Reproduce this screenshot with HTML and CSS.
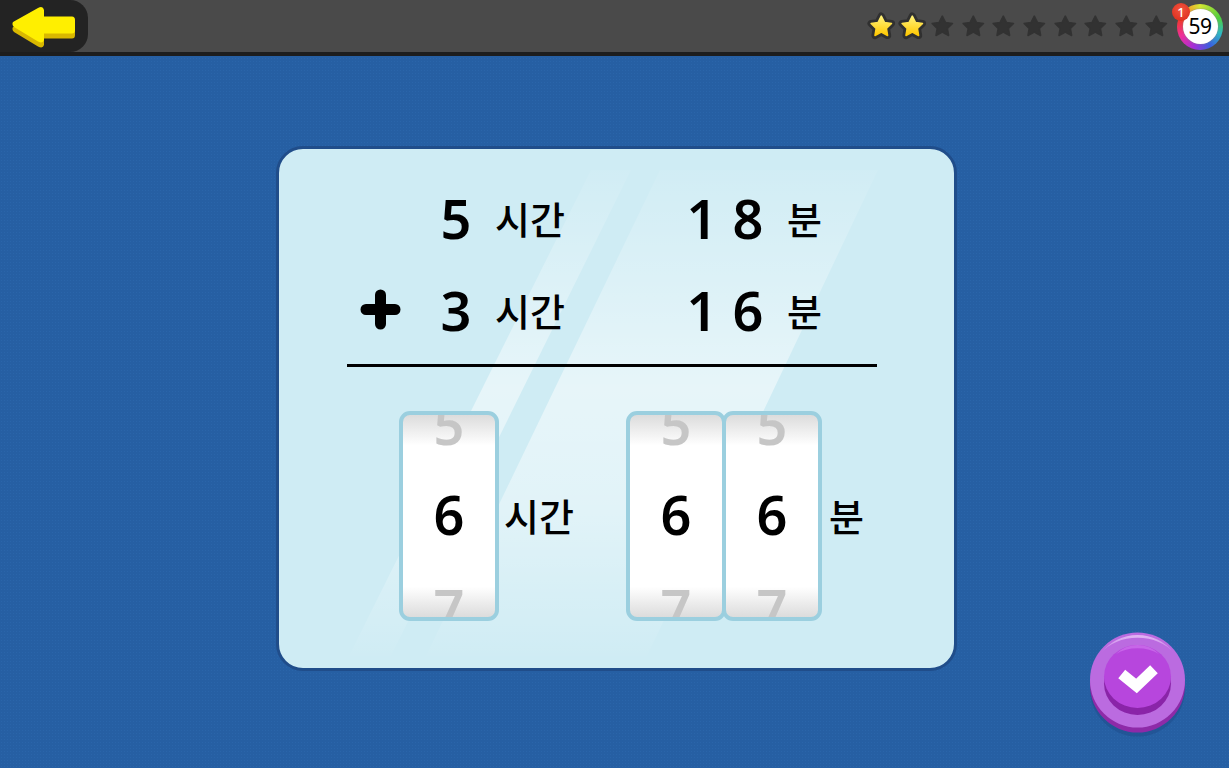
FILE: index.html
```html
<!DOCTYPE html>
<html lang="ko">
<head>
<meta charset="utf-8">
<title>시간 더하기</title>
<link rel="stylesheet" href="styles.css">
</head>
<body>
<header class="topbar">
  <button class="back" aria-label="back">
    <svg class="arrow" width="88" height="52" viewBox="0 0 88 52">
      <path class="arrow-top" d="M13 22 Q11.500 25 14 27 L38 41.500 Q43 44 44 40 L44 33.500 L72 33.500 Q75 33.500 75 30 L75 20 Q75 16.500 72 16.500 L44 16.500 L44 10 Q43 5.500 38 8 Z"/>
    </svg>
  </button>
  <div class="status">
    <div class="stars">
      <svg class="star" viewBox="-15 -15 30 30"><use href="#star-shape" class="halo"/><use href="#star-shape" class="gold"/></svg>
      <svg class="star" viewBox="-15 -15 30 30"><use href="#star-shape" class="halo"/><use href="#star-shape" class="gold"/></svg>
      <svg class="star" viewBox="-15 -15 30 30"><use href="#star-shape" class="dim"/></svg>
      <svg class="star" viewBox="-15 -15 30 30"><use href="#star-shape" class="dim"/></svg>
      <svg class="star" viewBox="-15 -15 30 30"><use href="#star-shape" class="dim"/></svg>
      <svg class="star" viewBox="-15 -15 30 30"><use href="#star-shape" class="dim"/></svg>
      <svg class="star" viewBox="-15 -15 30 30"><use href="#star-shape" class="dim"/></svg>
      <svg class="star" viewBox="-15 -15 30 30"><use href="#star-shape" class="dim"/></svg>
      <svg class="star" viewBox="-15 -15 30 30"><use href="#star-shape" class="dim"/></svg>
      <svg class="star" viewBox="-15 -15 30 30"><use href="#star-shape" class="dim"/></svg>
    </div>
    <div class="timer"><span class="timer-face">59</span><span class="badge">1</span></div>
  </div>
</header>

<svg class="defs" width="0" height="0">
  <defs>
    <path id="star-shape" d="M0 -10 L3.100 -3.800 L10 -2.800 L5 2.100 L6.200 9 L0 5.700 L-6.200 9 L-5 2.100 L-10 -2.800 L-3.100 -3.800 Z"/>
    <linearGradient id="goldfill" x1="0" y1="0" x2="0" y2="1">
      <stop offset="0" stop-color="#fff27a"/><stop offset="1" stop-color="#ffc800"/>
    </linearGradient>
    <linearGradient id="glass" gradientUnits="userSpaceOnUse" x1="0" y1="24" x2="0" y2="510">
      <stop offset="0" stop-color="#fff" stop-opacity=".05"/>
      <stop offset=".45" stop-color="#fff" stop-opacity=".5"/>
      <stop offset=".7" stop-color="#fff" stop-opacity=".38"/>
      <stop offset="1" stop-color="#fff" stop-opacity=".02"/>
    </linearGradient>
    <linearGradient id="rim" x1="0" y1="0" x2="0" y2="1">
      <stop offset="0" stop-color="#e2b6f4"/><stop offset="1" stop-color="#c47ee6"/>
    </linearGradient>
  </defs>
</svg>

<main class="stage">
  <section class="card">
    <svg class="shine" viewBox="0 0 681 525" width="681" height="525">
      <path d="M315 24 L355 24 L115 510 L73 510 Z" fill="url(#glass)"/>
      <path d="M384 24 L602 24 L371 510 L150 510 Z" fill="url(#glass)"/>
    </svg>
    <div class="sum">
      <div class="row">
        <span class="op"></span><span class="num">5</span><span class="unit unit-h">시간</span><span class="num">1</span><span class="num">8</span><span class="unit">분</span>
      </div>
      <div class="row">
        <span class="op"><svg width="44" height="44" viewBox="0 0 44 44"><path d="M21.500 7 V36 M7 21.500 H36" class="plus"/></svg></span><span class="num">3</span><span class="unit unit-h">시간</span><span class="num">1</span><span class="num">6</span><span class="unit">분</span>
      </div>
    </div>
    <div class="answer">
      <div class="drum"><span class="ghost ghost-top">5</span><span class="value">6</span><span class="ghost ghost-bottom">7</span></div>
      <span class="unit answer-h">시간</span>
      <div class="drum drum-m"><span class="ghost ghost-top">5</span><span class="value">6</span><span class="ghost ghost-bottom">7</span></div>
      <div class="drum drum-n"><span class="ghost ghost-top">5</span><span class="value">6</span><span class="ghost ghost-bottom">7</span></div>
      <span class="unit answer-m">분</span>
    </div>
  </section>
  <button class="check" aria-label="check">
    <svg width="110" height="110" viewBox="0 0 110 110">
      <ellipse cx="54.500" cy="61" rx="47.500" ry="47.500" fill="#1f4f8e" opacity=".6"/>
      <circle cx="54.500" cy="57" r="47.500" fill="#8e2aa8"/>
      <circle cx="54.500" cy="52" r="47.500" fill="#bb6be0"/>
      <path d="M18 25 A46 46 0 0 1 91 25 A42 30 0 0 0 18 25 Z" fill="url(#rim)"/>
      <ellipse cx="54.500" cy="55.500" rx="33.500" ry="31.500" fill="#8a24a8"/>
      <ellipse cx="54.500" cy="48.500" rx="33.500" ry="31.500" fill="#b746dd"/>
      <path d="M33 26 A30 30 0 0 1 76 26 A32 22 0 0 0 33 26 Z" fill="#c766e8"/>
      <path d="M43 49.500 L53.500 58 L67 45" class="tick"/>
    </svg>
  </button>
</main>
</body>
</html>
```
FILE: styles.css
```css
* { box-sizing: border-box; }
html, body { margin: 0; height: 100%; }
body {
  width: 1229px;
  height: 768px;
  overflow: hidden;
  display: flex;
  flex-direction: column;
  font-family: "Noto Sans", "Noto Sans CJK KR", sans-serif;
  color: #000;
  background-color: #265fa3;
  background-image: radial-gradient(#2a65aa 1px, transparent 1px);
  background-size: 3px 3px;
}
button { border: 0; padding: 0; background: none; }
.defs { position: absolute; }

.topbar {
  flex: 0 0 56px;
  display: flex;
  justify-content: space-between;
  align-items: stretch;
  background: #4a4a4a;
  border-bottom: 4px solid #1d1d1d;
}
.back {
  width: 88px;
  background: #232323;
  border-radius: 0 18px 18px 0;
  display: block;
}
.arrow { display: block; overflow: visible; filter: drop-shadow(0 5px 0 #d9b800); }
.arrow-top { fill: #ffef00; }

.status { display: flex; align-items: center; padding-right: 6px; }
.stars { display: flex; align-items: center; margin-right: 5px; margin-top: 1px; }
.star { width: 30.600px; height: 30.600px; display: block; }
.halo { fill: #303030; stroke: #303030; stroke-width: 7px; stroke-linejoin: round; }
.gold { fill: url(#goldfill); stroke: url(#goldfill); stroke-width: 1.500px; stroke-linejoin: round; }
.dim { fill: #323232; stroke: #323232; stroke-width: 1.500px; stroke-linejoin: round; }

.timer {
  position: relative;
  width: 46px;
  height: 46px;
  margin-top: 1px;
  border-radius: 50%;
  background: conic-gradient(#d5e832, #4fd03c 18%, #2fb8c4 30%, #3a5fe0 42%, #a32fd8 55%, #ef2f9a 68%, #f2382f 80%, #f4a02a 90%, #d5e832);
  display: flex;
  align-items: center;
  justify-content: center;
}
.timer-face {
  width: 35px;
  height: 35px;
  border-radius: 50%;
  background: #fff;
  box-shadow: 0 0 2px #888;
  font-size: 21px;
  line-height: 35px;
  text-align: center;
  letter-spacing: -.5px;
}
.badge {
  position: absolute;
  left: -5px;
  top: -1px;
  width: 18px;
  height: 18px;
  border-radius: 50%;
  background: radial-gradient(circle at 50% 35%, #f2543e, #d9281a);
  color: #fff;
  font-size: 13px;
  font-weight: 500;
  line-height: 18px;
  text-align: center;
}

.stage { position: relative; flex: 1; }
.card {
  position: relative;
  width: 681px;
  height: 525px;
  margin: 90px 0 0 276px;
  background: #cfecf4;
  border: 3px solid #204d8a;
  border-radius: 27px;
  padding: 23px 0 0 68px;
}
.shine { position: absolute; left: -3px; top: -3px; pointer-events: none; }
.sum, .answer { position: relative; }
.sum { width: 530px; border-bottom: 3px solid #000; height: 195px; }
.row {
  height: 92px;
  display: grid;
  grid-template-columns: 86px 46px 200px 46px 46px auto;
  align-items: center;
}
.num { font-size: 54px; font-weight: 600; line-height: 90px; text-align: center; }
.op { display: flex; padding-left: 12px; }
.op svg { display: block; }
.plus { fill: none; stroke: #000; stroke-width: 11px; stroke-linecap: round; }
.unit { font-size: 38px; font-weight: 500; line-height: 90px; white-space: nowrap; font-family: "Noto Sans CJK KR", sans-serif; }
.unit-h { padding-left: 16px; }
.row .unit:last-child { padding-left: 16px; }

.answer {
  display: flex;
  align-items: center;
  margin: 44px 0 0 52px;
  height: 210px;
}
.drum {
  position: relative;
  width: 100px;
  height: 210px;
  overflow: hidden;
  background: linear-gradient(#dcdcdc, #fff 15%, #fff 85%, #dcdcdc);
  border: 4px solid #9bcfdf;
  border-radius: 11px;
  flex: none;
}
.value {
  position: absolute;
  left: 0;
  right: 0;
  top: 68px;
  text-align: center;
  font-size: 54px;
  font-weight: 600;
  line-height: 62px;
}
.ghost {
  position: absolute;
  left: 0;
  right: 0;
  text-align: center;
  font-size: 54px;
  font-weight: 600;
  line-height: 62px;
  color: #c6c6c6;
}
.ghost-top { top: -22px; }
.ghost-bottom { bottom: -22px; }
.answer-h { width: 127px; padding-left: 5px; margin-top: -3px; }
.drum-n { margin-left: -4px; }
.answer-m { padding-left: 7px; margin-top: -3px; }

.check { position: absolute; left: 1083px; top: 572px; display: block; }
.check svg { display: block; }
.tick { fill: none; stroke: #fff; stroke-width: 11px; stroke-linecap: square; stroke-linejoin: miter; }
```
